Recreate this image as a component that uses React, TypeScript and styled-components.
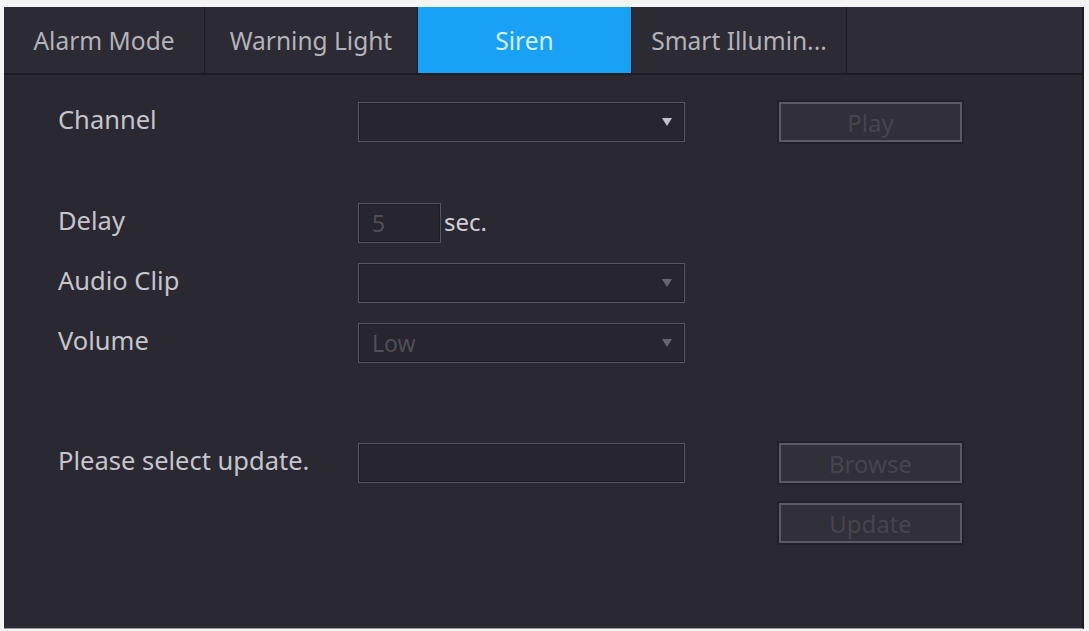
import React from "react";
import styled, { createGlobalStyle } from "styled-components";

const Global = createGlobalStyle`
  html, body { margin: 0; padding: 0; background: #ffffff; }
  body { font-family: "Noto Sans", "Open Sans", sans-serif; }
`;

const Page = styled.div`
  width: 1089px;
  height: 631px;
  padding: 7px 5px 0 4px;
  box-sizing: border-box;
  background: #f4f4f4;
`;

const Panel = styled.div`
  height: 622px;
  background: #2a2831;
  border-right: 2px solid #1c1b21;
  border-bottom: 1px solid #9c9ca0;
  display: flex;
  flex-direction: column;
  box-sizing: border-box;
`;

const TabBar = styled.div`
  display: flex;
  height: 68px;
  background: #2e2c36;
  border-bottom: 2px solid #1c1b21;
  box-sizing: border-box;
`;

const Tab = styled.div<{ $w: number; $active?: boolean }>`
  width: ${(p) => p.$w}px;
  flex: none;
  display: flex;
  align-items: center;
  justify-content: center;
  font-size: 24.5px;
  color: ${(p) => (p.$active ? "#d2efff" : "#b4b3ba")};
  background: ${(p) => (p.$active ? "#19a1f6" : "#2c2a33")};
  border-right: 1px solid #1b1a20;
  box-sizing: border-box;
  white-space: nowrap;
`;

const Content = styled.div`
  padding: 27px 0 0 54px;
  display: flex;
  flex-direction: column;
`;

const Row = styled.div<{ $top: number }>`
  display: grid;
  grid-template-columns: 300px 327px 94px 183px;
  align-items: center;
  height: 40px;
  margin-top: ${(p) => p.$top}px;
`;

const Label = styled.div`
  font-size: 25.5px;
  color: #c6c5cc;
  white-space: nowrap;
  margin-bottom: 6px;
`;

const Field = styled.div<{ $w?: number }>`
  width: ${(p) => (p.$w ? `${p.$w}px` : "100%")};
  height: 40px;
  box-sizing: border-box;
  border: 1px solid #57555f;
  background: #27252d;
  box-shadow: inset 0 0 0 1px #201f25;
  display: flex;
  align-items: center;
  justify-content: space-between;
  padding: 0 12px 0 13px;
  font-size: 23px;
  color: #504e58;
`;

const Arrow = styled.span<{ $dim?: boolean }>`
  width: 0;
  height: 0;
  border-left: 5px solid transparent;
  border-right: 5px solid transparent;
  border-top: 8px solid ${(p) => (p.$dim ? "#67666f" : "#c2c1c8")};
`;

const Inline = styled.div`
  display: flex;
  align-items: center;
  gap: 3px;
`;

const Unit = styled.span`
  font-size: 24px;
  color: #d0cfd5;
  margin-bottom: 4px;
`;

const Button = styled.div`
  grid-column: 4;
  height: 40px;
  box-sizing: border-box;
  border: 2px solid #5b5a63;
  background: #312f38;
  box-shadow: 0 0 0 2px #222127;
  display: flex;
  align-items: center;
  justify-content: center;
  font-size: 24px;
  color: #46454e;
`;

export default function App() {
  return (
    <>
      <Global />
      <Page>
        <Panel>
          <TabBar>
            <Tab $w={201}>Alarm Mode</Tab>
            <Tab $w={213}>Warning Light</Tab>
            <Tab $w={214} $active>
              Siren
            </Tab>
            <Tab $w={215}>Smart Illumin...</Tab>
          </TabBar>
          <Content>
            <Row $top={0}>
              <Label>Channel</Label>
              <Field>
                <span />
                <Arrow />
              </Field>
              <span />
              <Button>Play</Button>
            </Row>
            <Row $top={61}>
              <Label>Delay</Label>
              <Inline>
                <Field $w={83}>5</Field>
                <Unit>sec.</Unit>
              </Inline>
            </Row>
            <Row $top={20}>
              <Label>Audio Clip</Label>
              <Field>
                <span />
                <Arrow $dim />
              </Field>
            </Row>
            <Row $top={20}>
              <Label>Volume</Label>
              <Field>
                <span>Low</span>
                <Arrow $dim />
              </Field>
            </Row>
            <Row $top={80}>
              <Label>Please select update.</Label>
              <Field />
              <span />
              <Button>Browse</Button>
            </Row>
            <Row $top={20}>
              <span />
              <span />
              <span />
              <Button>Update</Button>
            </Row>
          </Content>
        </Panel>
      </Page>
    </>
  );
}
